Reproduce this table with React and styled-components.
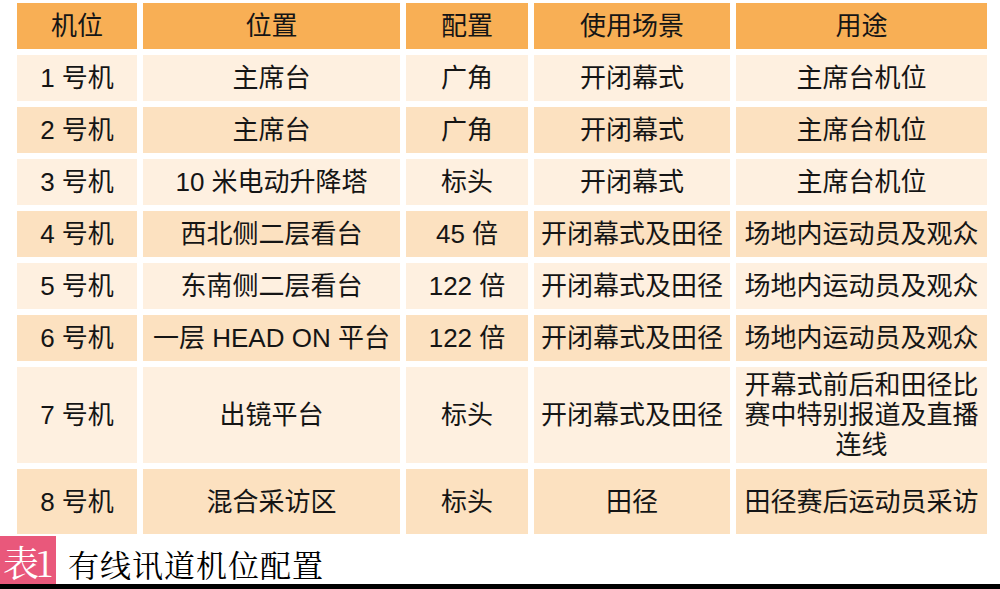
import React from "react";
import styled, { createGlobalStyle } from "styled-components";

const Global = createGlobalStyle`
  html, body { margin: 0; padding: 0; background: #fff; }
  body { width: 1000px; height: 589px; overflow: hidden; }
`;

const Page = styled.div`
  width: 1000px;
  height: 589px;
  display: flex;
  flex-direction: column;
  background: #fff;
`;

const Table = styled.div`
  display: grid;
  grid-template-columns: 120px 257px 122px 196px 251px;
  grid-template-rows: 46px repeat(6, 46px) 96px 65px;
  gap: 6px;
  padding: 3px 13px 0 17px;
`;

const Cell = styled.div`
  display: flex;
  align-items: center;
  justify-content: center;
  text-align: center;
  font-family: "Liberation Sans", "Noto Sans CJK SC", sans-serif;
  font-size: 26px;
  line-height: 30px;
  color: #151515;
  background: ${(p) => (p.$head ? "#F8AF55" : p.$alt ? "#FCE1C0" : "#FEF0E0")};
  white-space: ${(p) => (p.$wrap ? "normal" : "nowrap")};
  padding: ${(p) => (p.$wrap ? "0 4px" : "0")};
`;

const Caption = styled.div`
  margin-top: 2px;
  display: flex;
  align-items: center;
  height: 48px;
`;

const Tag = styled.div`
  width: 56px;
  height: 48px;
  background: #E9587B;
  color: #fff;
  font-family: "Noto Serif CJK SC", "Liberation Serif", serif;
  font-size: 36px;
  line-height: 48px;
  display: flex;
  align-items: center;
  justify-content: center;
  letter-spacing: -3px;
  white-space: nowrap;
  padding: 3px 3px 0 0;
  box-sizing: border-box;
`;

const Title = styled.div`
  margin-left: 12px;
  font-family: "Noto Serif CJK SC", "Liberation Serif", serif;
  font-size: 31px;
  letter-spacing: 1px;
  color: #000;
  padding-top: 6px;
`;

const Bar = styled.div`
  height: 7px;
  background: #000;
`;

const head = ["机位", "位置", "配置", "使用场景", "用途"];
const rows = [
  ["1 号机", "主席台", "广角", "开闭幕式", "主席台机位"],
  ["2 号机", "主席台", "广角", "开闭幕式", "主席台机位"],
  ["3 号机", "10 米电动升降塔", "标头", "开闭幕式", "主席台机位"],
  ["4 号机", "西北侧二层看台", "45 倍", "开闭幕式及田径", "场地内运动员及观众"],
  ["5 号机", "东南侧二层看台", "122 倍", "开闭幕式及田径", "场地内运动员及观众"],
  ["6 号机", "一层 HEAD ON 平台", "122 倍", "开闭幕式及田径", "场地内运动员及观众"],
  ["7 号机", "出镜平台", "标头", "开闭幕式及田径", "开幕式前后和田径比赛中特别报道及直播连线"],
  ["8 号机", "混合采访区", "标头", "田径", "田径赛后运动员采访"],
];

export default function App() {
  return (
    <Page>
      <Global />
      <Table>
        {head.map((h) => (
          <Cell key={h} $head>{h}</Cell>
        ))}
        {rows.map((r, i) =>
          r.map((c, j) => (
            <Cell key={`${i}-${j}`} $alt={i % 2 === 1} $wrap={i === 6 && j === 4}>
              {c}
            </Cell>
          ))
        )}
      </Table>
      <Caption>
        <Tag>表1</Tag>
        <Title>有线讯道机位配置</Title>
      </Caption>
      <Bar />
    </Page>
  );
}
